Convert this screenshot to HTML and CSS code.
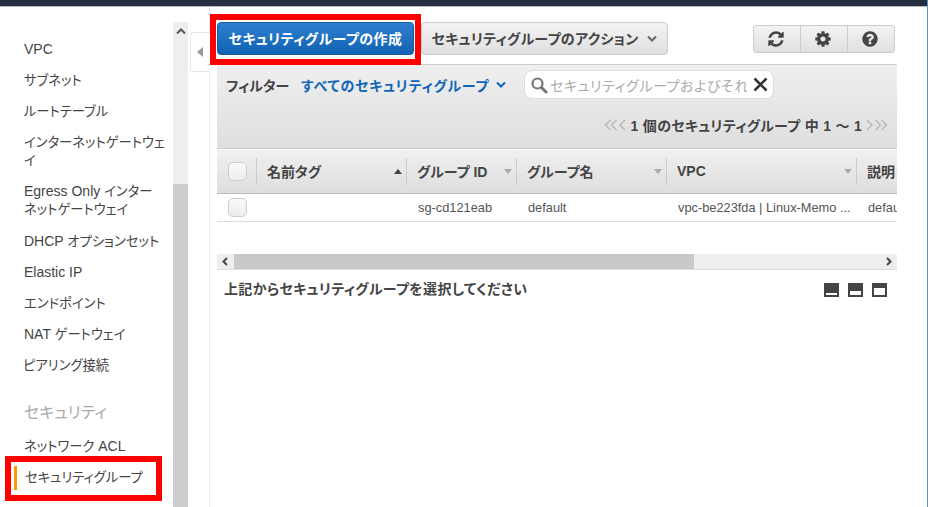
FILE: index.html
```html
<!DOCTYPE html>
<html lang="ja">
<head>
<meta charset="utf-8">
<title>セキュリティグループ</title>
<link rel="stylesheet" href="styles.css">
</head>
<body>
<div class="topbar"></div>
<div class="layout">
  <aside class="sidebar">
    <nav class="nav">
      <a class="nav-item">VPC</a>
      <a class="nav-item"><span class="cjk">サブネット</span></a>
      <a class="nav-item"><span class="cjk">ルートテーブル</span></a>
      <a class="nav-item"><span class="cjk">インターネットゲートウェ<br>イ</span></a>
      <a class="nav-item nav-wide">Egress Only <span class="cjk">インター<br>ネットゲートウェイ</span></a>
      <a class="nav-item">DHCP <span class="cjk">オプションセット</span></a>
      <a class="nav-item">Elastic IP</a>
      <a class="nav-item"><span class="cjk">エンドポイント</span></a>
      <a class="nav-item">NAT <span class="cjk">ゲートウェイ</span></a>
      <a class="nav-item nav-tight"><span class="cjk">ピアリング接続</span></a>
      <div class="nav-heading">セキュリティ</div>
      <a class="nav-item"><span class="cjk">ネットワーク</span> ACL</a>
      <a class="nav-item nav-active"><span class="cjk">セキュリティグループ</span></a>
    </nav>
    <div class="side-scroll">
      <svg class="side-up" width="10" height="7" viewBox="0 0 10 7"><path d="M1 5.5 5 1.5l4 4" fill="none" stroke="#555" stroke-width="2"/></svg>
      <div class="side-thumb"></div>
    </div>
  </aside>
  <div class="gutter">
    <div class="collapse"><span class="collapse-arrow"></span></div>
  </div>
  <main class="main">
    <div class="toolbar">
      <button class="btn btn-primary"><span class="lift">セキュリティグループの作成</span></button>
      <button class="btn btn-action"><span class="lift">セキュリティグループのアクション</span>
        <svg width="10" height="7" viewBox="0 0 10 7"><path d="M1 1.5 5 5.5l4-4" fill="none" stroke="#666" stroke-width="2"/></svg>
      </button>
      <div class="tools">
        <span class="tool"><svg width="18" height="18" viewBox="0 0 1792 1792"><path fill="#444" d="M1639 1056q0 5-1 7-64 268-268 434.5t-478 166.5q-146 0-282.5-55t-243.5-157l-129 129q-19 19-45 19t-45-19-19-45v-448q0-26 19-45t45-19h448q26 0 45 19t19 45-19 45l-137 137q71 66 161 102t187 36q134 0 250-65t186-179q11-17 53-117 8-23 30-23h192q13 0 22.5 9.5t9.5 22.5zm25-800v448q0 26-19 45t-45 19h-448q-26 0-45-19t-19-45 19-45l138-138q-148-137-349-137-134 0-250 65t-186 179q-11 17-53 117-8 23-30 23h-199q-13 0-22.5-9.5t-9.5-22.5v-7q65-268 270-434.5t480-166.5q146 0 284 55.5t245 156.5l130-129q19-19 45-19t45 19 19 45z"/></svg></span>
        <span class="tool"><svg width="18" height="18" viewBox="0 0 1792 1792"><path fill="#444" d="M1152 896q0-106-75-181t-181-75-181 75-75 181 75 181 181 75 181-75 75-181zm512-109v222q0 12-8 23t-20 13l-185 28q-19 54-39 91 35 50 107 138 10 12 10 25t-9 23q-27 37-99 108t-94 71q-12 0-26-9l-138-108q-44 23-91 38-16 136-29 186-7 28-36 28h-222q-14 0-24.5-8.5t-11.5-21.5l-28-184q-49-16-90-37l-141 107q-10 9-25 9-14 0-25-11-126-114-165-168-7-10-7-23 0-12 8-23 15-21 51-66.5t54-70.5q-27-50-41-99l-183-27q-13-2-21-12.5t-8-23.5v-222q0-12 8-23t19-13l186-28q14-46 39-92-40-57-107-138-10-12-10-24 0-10 9-23 26-36 98.5-107.5t94.5-71.5q13 0 26 10l138 107q44-23 91-38 16-136 29-186 7-28 36-28h222q14 0 24.5 8.5t11.5 21.5l28 184q49 16 90 37l142-107q9-9 24-9 13 0 25 10 129 119 165 170 7 8 7 22 0 12-8 23-15 21-51 66.5t-54 70.5q26 50 41 98l183 28q13 2 21 12.5t8 23.5z"/></svg></span>
        <span class="tool"><svg width="18" height="18" viewBox="0 0 1792 1792"><path fill="#444" d="M1024 1376v-192q0-14-9-23t-23-9h-192q-14 0-23 9t-9 23v192q0 14 9 23t23 9h192q14 0 23-9t9-23zm256-672q0-88-55.5-163t-138.5-116-170-41q-243 0-371 213-15 24 8 42l132 100q7 6 19 6 16 0 25-12 53-68 86-92 34-24 86-24 48 0 85.5 26t37.5 59q0 38-20 61t-68 45q-63 28-115.5 86.5t-52.5 125.5v36q0 14 9 23t23 9h192q14 0 23-9t9-23q0-19 21.5-49.5t54.5-49.5q32-18 49-28.5t46-35 44.5-48 28-60.5 12.5-81zm384 192q0 209-103 385.5t-279.5 279.5-385.5 103-385.5-103-279.5-279.5-103-385.5 103-385.5 279.5-279.5 385.5-103 385.5 103 279.5 279.5 103 385.5z"/></svg></span>
      </div>
    </div>
    <section class="filter">
      <div class="filter-row">
        <span class="filter-label">フィルター</span>
        <span class="filter-value">すべてのセキュリティグループ</span>
        <svg class="filter-caret" width="10" height="7" viewBox="0 0 10 7"><path d="M1 1.5 5 5.5l4-4" fill="none" stroke="#1166bb" stroke-width="2"/></svg>
        <div class="search">
          <svg class="search-icon" width="18" height="18" viewBox="0 0 18 18"><circle cx="7.5" cy="7.5" r="5" fill="none" stroke="#777" stroke-width="2.2"/><path d="M11.5 11.5 16 16" stroke="#777" stroke-width="3" stroke-linecap="round"/></svg>
          <span class="search-text">セキュリティグループおよびそれらのプロパティ</span>
          <svg width="15" height="15" viewBox="0 0 15 15"><path d="M1.500 1.500l12 12M13.500 1.500l-12 12" stroke="#333" stroke-width="2.600"/></svg>
        </div>
      </div>
      <div class="pager">
        <svg width="14" height="12" viewBox="0 0 14 12"><path d="M6.500 1 1.500 6l5 5M12.500 1l-5 5 5 5" fill="none" stroke="#bbb" stroke-width="1.600"/></svg>
        <svg width="9" height="12" viewBox="0 0 9 12"><path d="M7 1 2 6l5 5" fill="none" stroke="#bbb" stroke-width="1.600"/></svg>
        <span class="pager-text">1 個のセキュリティグループ 中 1 ～ 1</span>
        <svg width="9" height="12" viewBox="0 0 9 12"><path d="M2 1l5 5-5 5" fill="none" stroke="#bbb" stroke-width="1.600"/></svg>
        <svg width="14" height="12" viewBox="0 0 14 12"><path d="M1.500 1l5 5-5 5M7.500 1l5 5-5 5" fill="none" stroke="#bbb" stroke-width="1.600"/></svg>
      </div>
    </section>
    <div class="table">
      <div class="th th-check"><span class="check"></span></div>
      <div class="th"><span class="lift">名前タグ</span><span class="sort sort-up"></span></div>
      <div class="th"><span class="lift">グループ ID</span><span class="sort"></span></div>
      <div class="th"><span class="lift">グループ名</span><span class="sort"></span></div>
      <div class="th"><span class="lift">VPC</span><span class="sort"></span></div>
      <div class="th th-last"><span class="lift">説明</span></div>
      <div class="td td-check"><span class="check"></span></div>
      <div class="td"></div>
      <div class="td">sg-cd121eab</div>
      <div class="td">default</div>
      <div class="td">vpc-be223fda | Linux-Memo ...</div>
      <div class="td td-last">default</div>
    </div>
    <div class="hscroll">
      <svg class="hs-arrow" width="17" height="15" viewBox="0 0 17 15"><path d="M10 4 6.500 7.500 10 11" fill="none" stroke="#444" stroke-width="2"/></svg>
      <div class="hs-thumb"></div>
      <svg class="hs-arrow" width="17" height="15" viewBox="0 0 17 15"><path d="M7 4l3.500 3.500L7 11" fill="none" stroke="#444" stroke-width="2"/></svg>
    </div>
    <div class="detail">
      <span class="detail-text">上記からセキュリティグループを選択してください</span>
      <div class="panes">
        <span class="pane pane-low"></span>
        <span class="pane pane-mid"></span>
        <span class="pane pane-high"></span>
      </div>
    </div>
  </main>
</div>
<div class="mark mark-create"></div>
<div class="mark mark-nav"></div>
</body>
</html>
```
FILE: styles.css
```css
* { box-sizing: border-box; }
html, body { margin: 0; height: 507px; overflow: hidden; background: #fff; }
body {
  font-family: "Liberation Sans", "Noto Sans CJK JP", sans-serif;
  font-size: 14px;
  font-feature-settings: "palt";
  color: #444;
  border-right: 1px solid #5b8fc0;
  position: relative;
}
.topbar { height: 7px; background: #232f3e; border-bottom: 1px solid #b9bdc2; }
.layout { display: flex; height: 500px; }
.lift { display: inline-block; padding-bottom: 2px; }

/* sidebar */
.sidebar { width: 188px; display: flex; flex: none; }
.nav { width: 173px; flex: none; padding-top: 27px; }
.nav-item { display: block; height: auto; padding: 6px 6px 7px 24px; line-height: 18px; color: #444; white-space: nowrap; }
.nav-wide { padding-bottom: 8px; }
.nav-tight { padding-left: 23px; }
.cjk { font-size: 13.300px; line-height: 1; }
.nav-heading { font-size: 16px; color: #aaa; line-height: 22px; padding: 21px 0 7px 24px; }
.nav-active { position: relative; padding-left: 25px; }
.nav-active::before { content: ""; position: absolute; left: 14px; top: 4px; width: 3px; height: 24px; background: #f90; }
.side-scroll { width: 15px; flex: none; margin-top: 15px; background: #eee; position: relative; display: flex; flex-direction: column; }
.side-up { display: block; margin: 6px auto 0 3px; }
.side-thumb { margin-top: 149px; flex: 1; background: #ccc; }

.gutter { width: 22px; flex: none; border-right: 1px solid #eee; position: relative; }
.collapse { position: absolute; left: 2px; top: 25px; width: 20px; height: 40px; background: #fff; border: 1px solid #e6e6e6; border-right: 0; border-radius: 4px 0 0 4px; display: flex; align-items: center; justify-content: center; }
.collapse-arrow { width: 0; height: 0; border-style: solid; border-color: transparent #999 transparent transparent; border-width: 5.500px 6px 5.500px 0; margin-right: 2px; }

/* main */
.main { width: 680px; margin-left: 7px; flex: none; padding-top: 15px; }
.toolbar { display: flex; align-items: center; height: 33px; }
.btn { font: inherit; font-feature-settings: "palt"; height: 33px; border-radius: 4px; padding: 0; cursor: default; }
.btn-primary { width: 197px; color: #fff; font-weight: bold; letter-spacing: 0.450px; background: linear-gradient(#2f7fd0, #1262b3); border: 1px solid #15599f; }
.btn-action { width: 247px; margin-left: 7px; color: #444; font-weight: bold; letter-spacing: 0.300px; background: linear-gradient(#f4f4f4, #dfdfdf); border: 1px solid #ccc; display: flex; align-items: center; justify-content: center; gap: 9px; }
.tools { display: flex; margin-left: 85px; height: 28px; border: 1px solid #ccc; border-radius: 3px; background: linear-gradient(#f3f3f3, #e0e0e0); }
.tool { width: 47px; display: flex; align-items: center; justify-content: center; border-left: 1px solid #ccc; padding-right: 2px; }
.tool:first-child { border-left: 0; width: 46px; }

.filter { margin-top: 9px; height: 85px; background: linear-gradient(#efefef, #dedede); border-top: 1px solid #ccc; border-bottom: 1px solid #ccc; padding: 5px 0 0 9px; }
.filter-row { display: flex; align-items: center; height: 29px; }
.filter-label { font-weight: bold; width: 63px; white-space: nowrap; }
.filter-value { margin-left: 12px; color: #1166bb; font-weight: bold; width: 187px; white-space: nowrap; letter-spacing: 0.800px; }
.filter-caret { margin-left: 8px; }
.search { margin-left: 18px; width: 250px; height: 29px; background: #fff; border: 1px solid #ddd; border-radius: 8px; display: flex; align-items: center; padding: 0 5px; }
.search-icon { flex: none; }
.search-text { width: 197px; margin: 0 6px 0 2px; overflow: hidden; white-space: nowrap; color: #aaa; flex: none; letter-spacing: 0.600px; }
.pager { display: flex; justify-content: flex-end; align-items: center; height: 18px; margin-top: 17px; padding-right: 9px; }
.pager-text { font-weight: bold; color: #444; margin: 0 3px 0 4px; letter-spacing: 0.300px; }

.table { margin-top: 1px; display: grid; grid-template-columns: 40px 150px 110px 150px 190px 40px; overflow: hidden; height: 72px; }
.th { height: 44px; background: linear-gradient(#f0f0f0, #dedede); border-bottom: 1px solid #bbb; padding-left: 10px; display: flex; align-items: center; justify-content: space-between; font-weight: bold; position: relative; white-space: nowrap; overflow: hidden; }
.th::after { content: ""; position: absolute; right: 0; top: 8px; height: 27px; width: 1px; background: #ccc; }
.th-last::after { display: none; }
.th-check { padding-left: 11px; }
.sort { width: 0; height: 0; margin-right: 5px; border-style: solid; border-color: #aaa transparent transparent; border-width: 5px 4px 0; }
.sort-up { border-color: transparent transparent #444; border-width: 0 4px 5px; }
.check { width: 19px; height: 19px; flex: none; border: 1px solid #ccc; border-radius: 5px; background: linear-gradient(#fafafa, #ececec); }
.td { height: 28px; border-bottom: 1px solid #ddd; padding-left: 11px; display: flex; align-items: center; font-size: 12.800px; color: #555; white-space: nowrap; overflow: hidden; }
.td-check { padding-left: 11px; }

.hscroll { margin-top: 32px; height: 16px; display: flex; background: #eee; border-bottom: 1px solid #ddd; }
.hs-arrow { flex: none; display: block; }
.hs-thumb { width: 460px; background: #c9c9c9; margin-right: auto; }
.detail { display: flex; justify-content: space-between; align-items: center; height: 40px; padding: 0 10px 0 7px; }
.detail-text { font-weight: bold; padding-bottom: 5px; letter-spacing: 0.350px; }
.panes { display: flex; gap: 9px; }
.pane { width: 15px; height: 14px; background: #444; position: relative; }
.pane::after { content: ""; position: absolute; left: 2px; right: 2px; background: #fff; }
.pane-low::after { bottom: 2px; height: 2px; }
.pane-mid::after { bottom: 2px; height: 4px; }
.pane-high::after { top: 5px; height: 7px; }

/* annotation overlays */
.mark { position: absolute; border: 6px solid #f00; pointer-events: none; }
.mark-create { left: 210px; top: 14px; width: 211px; height: 51px; }
.mark-nav { left: 5px; top: 456px; width: 157px; height: 45px; }
```
